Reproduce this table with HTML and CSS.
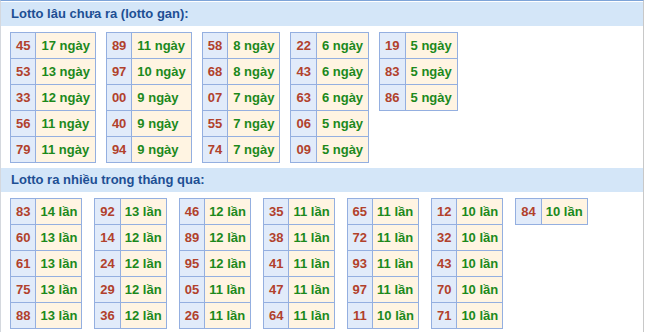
FILE: index.html
```html
<!DOCTYPE html>
<html lang="vi">
<head>
<meta charset="utf-8">
<title>Lotto</title>
<link rel="stylesheet" href="styles.css">
</head>
<body>
<div class="box">
  <div class="head">Lotto lâu chưa ra (lotto gan):</div>
  <div class="tables gan">
    <table>
      <tr><td class="n">45</td><td class="v">17 ngày</td></tr>
      <tr><td class="n">53</td><td class="v">13 ngày</td></tr>
      <tr><td class="n">33</td><td class="v">12 ngày</td></tr>
      <tr><td class="n">56</td><td class="v">11 ngày</td></tr>
      <tr><td class="n">79</td><td class="v">11 ngày</td></tr>
    </table>
    <table>
      <tr><td class="n">89</td><td class="v">11 ngày</td></tr>
      <tr><td class="n">97</td><td class="v">10 ngày</td></tr>
      <tr><td class="n">00</td><td class="v">9 ngày</td></tr>
      <tr><td class="n">40</td><td class="v">9 ngày</td></tr>
      <tr><td class="n">94</td><td class="v">9 ngày</td></tr>
    </table>
    <table>
      <tr><td class="n">58</td><td class="v">8 ngày</td></tr>
      <tr><td class="n">68</td><td class="v">8 ngày</td></tr>
      <tr><td class="n">07</td><td class="v">7 ngày</td></tr>
      <tr><td class="n">55</td><td class="v">7 ngày</td></tr>
      <tr><td class="n">74</td><td class="v">7 ngày</td></tr>
    </table>
    <table>
      <tr><td class="n">22</td><td class="v">6 ngày</td></tr>
      <tr><td class="n">43</td><td class="v">6 ngày</td></tr>
      <tr><td class="n">63</td><td class="v">6 ngày</td></tr>
      <tr><td class="n">06</td><td class="v">5 ngày</td></tr>
      <tr><td class="n">09</td><td class="v">5 ngày</td></tr>
    </table>
    <table>
      <tr><td class="n">19</td><td class="v">5 ngày</td></tr>
      <tr><td class="n">83</td><td class="v">5 ngày</td></tr>
      <tr><td class="n">86</td><td class="v">5 ngày</td></tr>
    </table>
  </div>
  <div class="head">Lotto ra nhiều trong tháng qua:</div>
  <div class="tables nhieu">
    <table>
      <tr><td class="n">83</td><td class="v">14 lần</td></tr>
      <tr><td class="n">60</td><td class="v">13 lần</td></tr>
      <tr><td class="n">61</td><td class="v">13 lần</td></tr>
      <tr><td class="n">75</td><td class="v">13 lần</td></tr>
      <tr><td class="n">88</td><td class="v">13 lần</td></tr>
    </table>
    <table>
      <tr><td class="n">92</td><td class="v">13 lần</td></tr>
      <tr><td class="n">14</td><td class="v">12 lần</td></tr>
      <tr><td class="n">24</td><td class="v">12 lần</td></tr>
      <tr><td class="n">29</td><td class="v">12 lần</td></tr>
      <tr><td class="n">36</td><td class="v">12 lần</td></tr>
    </table>
    <table>
      <tr><td class="n">46</td><td class="v">12 lần</td></tr>
      <tr><td class="n">89</td><td class="v">12 lần</td></tr>
      <tr><td class="n">95</td><td class="v">12 lần</td></tr>
      <tr><td class="n">05</td><td class="v">11 lần</td></tr>
      <tr><td class="n">26</td><td class="v">11 lần</td></tr>
    </table>
    <table>
      <tr><td class="n">35</td><td class="v">11 lần</td></tr>
      <tr><td class="n">38</td><td class="v">11 lần</td></tr>
      <tr><td class="n">41</td><td class="v">11 lần</td></tr>
      <tr><td class="n">47</td><td class="v">11 lần</td></tr>
      <tr><td class="n">64</td><td class="v">11 lần</td></tr>
    </table>
    <table>
      <tr><td class="n">65</td><td class="v">11 lần</td></tr>
      <tr><td class="n">72</td><td class="v">11 lần</td></tr>
      <tr><td class="n">93</td><td class="v">11 lần</td></tr>
      <tr><td class="n">97</td><td class="v">11 lần</td></tr>
      <tr><td class="n">11</td><td class="v">10 lần</td></tr>
    </table>
    <table>
      <tr><td class="n">12</td><td class="v">10 lần</td></tr>
      <tr><td class="n">32</td><td class="v">10 lần</td></tr>
      <tr><td class="n">43</td><td class="v">10 lần</td></tr>
      <tr><td class="n">70</td><td class="v">10 lần</td></tr>
      <tr><td class="n">71</td><td class="v">10 lần</td></tr>
    </table>
    <table>
      <tr><td class="n">84</td><td class="v">10 lần</td></tr>
    </table>
  </div>
</div>
</body>
</html>
```
FILE: styles.css
```css
html, body {
  margin: 0;
  padding: 0;
  background: #ffffff;
}
.box {
  width: 644px;
  height: 332px;
  box-sizing: border-box;
  border-top: 1px solid #7ea4d8;
  border-left: 1px solid #d4d8de;
  border-right: 1px solid #c8c8c8;
  font-family: "Liberation Sans", Arial, sans-serif;
  font-weight: bold;
  font-size: 13px;
}
.head {
  background: #d4e6f8;
  color: #1d4f94;
  font-size: 13px;
  height: 24px;
  line-height: 24px;
  padding-left: 10px;
  margin-top: 1px;
}
.tables {
  display: flex;
  align-items: flex-start;
  padding: 6px 0 4px 9px;
}
.gan {
  gap: 10px;
}
.nhieu {
  gap: 12px;
}
table {
  border-collapse: collapse;
}
td {
  border: 1px solid #94afe0;
  height: 25px;
  padding: 0 5px;
  white-space: nowrap;
}
td.n {
  background: #e1ebfa;
  color: #b1412c;
  text-align: center;
}
td.v {
  background: #fff4e2;
  color: #1c891c;
}
.nhieu td.v {
  padding: 0 4px;
}
```
